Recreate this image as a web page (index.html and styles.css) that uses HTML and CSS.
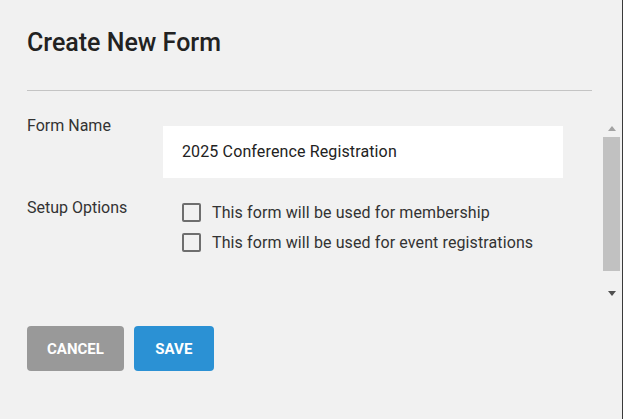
FILE: index.html
```html
<!DOCTYPE html>
<html lang="en">
<head>
<meta charset="utf-8">
<title>Create New Form</title>
<link rel="stylesheet" href="styles.css">
</head>
<body>
<div class="modal">
  <div class="header">
    <h1 class="title">Create New Form</h1>
  </div>
  <div class="body">
    <div class="content">
      <div class="row row-name">
        <div class="label">Form Name</div>
        <div class="input">2025 Conference Registration</div>
      </div>
      <div class="row row-options">
        <div class="label">Setup Options</div>
        <div class="options">
          <label class="option"><span class="box"></span><span>This form will be used for membership</span></label>
          <label class="option"><span class="box"></span><span>This form will be used for event registrations</span></label>
        </div>
      </div>
    </div>
    <div class="scrollbar">
      <div class="sb-btn"><span class="arrow-up"></span></div>
      <div class="sb-thumb"></div>
      <div class="sb-track"></div>
      <div class="sb-btn"><span class="arrow-down"></span></div>
    </div>
  </div>
  <div class="actions">
    <button class="btn btn-cancel">Cancel</button>
    <button class="btn btn-save">Save</button>
  </div>
</div>
</body>
</html>
```
FILE: styles.css
```css
html, body {
  margin: 0;
  padding: 0;
  height: 100%;
}
body {
  background: #f1f1f1;
  font-family: Roboto, "Liberation Sans", Arial, sans-serif;
  color: #333;
}
.modal {
  height: 419px;
  box-sizing: border-box;
  border-right: 1px solid #3a3a3a;
  padding-left: 27px;
}
.header {
  margin-right: 30px;
  padding-top: 28px;
  border-bottom: 1px solid #c4c4c4;
  height: 91px;
  box-sizing: border-box;
}
.title {
  margin: 0;
  font-size: 25px;
  font-weight: 500;
  line-height: 30px;
  color: #222;
}
.body {
  display: flex;
  margin-top: 29px;
  margin-right: 2px;
}
.content {
  flex: 1;
}
.row {
  display: flex;
}
.label {
  width: 136px;
  flex: none;
  font-size: 16px;
  line-height: 19px;
  color: #333;
}
.row-name .label {
  margin-top: -4px;
}
.row-name .input {
  margin-top: 6px;
  width: 400px;
  height: 52px;
  box-sizing: border-box;
  background: #fff;
  padding-left: 19px;
  font-size: 16px;
  letter-spacing: 0.13px;
  line-height: 52px;
  color: #222;
}
.row-options {
  margin-top: 20px;
}
.options {
  display: flex;
  flex-direction: column;
  gap: 11px;
  padding-left: 19px;
  margin-top: 5px;
}
.option {
  display: flex;
  align-items: center;
  gap: 11px;
  font-size: 16px;
  letter-spacing: 0.11px;
  line-height: 19px;
  color: #333;
}
.box {
  width: 19px;
  height: 19px;
  box-sizing: border-box;
  border: 2px solid #6e6e6e;
  border-radius: 2px;
  flex: none;
}
.scrollbar {
  width: 17px;
  height: 182px;
  display: flex;
  flex-direction: column;
  flex: none;
}
.sb-btn {
  height: 17px;
  display: flex;
  align-items: center;
  justify-content: center;
  flex: none;
}
.arrow-up {
  width: 0;
  height: 0;
  border-left: 4.5px solid transparent;
  border-right: 4.5px solid transparent;
  border-bottom: 5px solid #a3a3a3;
}
.arrow-down {
  width: 0;
  height: 0;
  border-left: 4.5px solid transparent;
  border-right: 4.5px solid transparent;
  border-top: 5px solid #505050;
}
.sb-thumb {
  height: 134px;
  background: #c1c1c1;
  flex: none;
}
.sb-track {
  flex: 1;
}
.actions {
  display: flex;
  gap: 10px;
  margin-top: 24px;
}
.btn {
  height: 45px;
  border: none;
  border-radius: 4px;
  padding: 0 20px;
  font-family: Roboto, "Liberation Sans", Arial, sans-serif;
  font-size: 15px;
  font-weight: 700;
  text-transform: uppercase;
  color: #fff;
}
.btn-cancel {
  background: #999;
}
.btn-save {
  background: #2b91d4;
  min-width: 80px;
}
```
